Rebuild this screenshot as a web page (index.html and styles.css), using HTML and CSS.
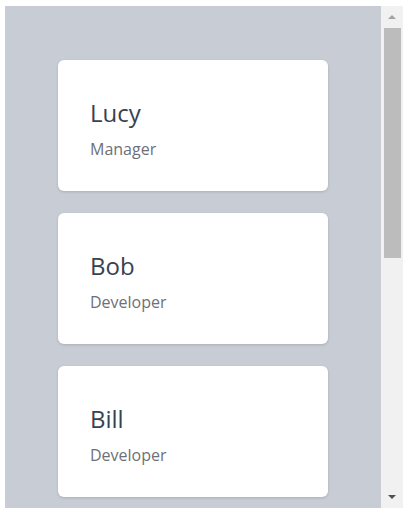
FILE: index.html
```html
<!DOCTYPE html>
<html lang="en">
<head>
    <meta charset="UTF-8">
    <meta name="viewport" content="width=device-width, initial-scale=1.0">
    <title>Team</title>
    <link rel="stylesheet" href="styles.css">
</head>
<body>

    <div class="panel">
        <div class="list">
            <div class="card">
                <div class="name">Lucy</div>
                <div class="role">Manager</div>
            </div>
            <div class="card">
                <div class="name">Bob</div>
                <div class="role">Developer</div>
            </div>
            <div class="card">
                <div class="name">Bill</div>
                <div class="role">Developer</div>
            </div>
        </div>

        <!-- scrollbar drawn by hand, headless hides the real one -->
        <div class="scrollbar">
            <div class="arrow up"></div>
            <div class="track">
                <div class="thumb"></div>
            </div>
            <div class="arrow down"></div>
        </div>
    </div>

</body>
</html>
```

FILE: styles.css
```css
/* Page */
body {
    margin: 6px 5px;
    background-color: #ffffff;
    font-family: 'Open Sans', 'Noto Sans', sans-serif;
}
/* Box holding the list and its scrollbar */
.panel {
    width: 398px;
    height: 502px;
    display: flex;
}
/* List of people */
.list {
    flex: 1;
    overflow: hidden;
    background-color: #c8cdd5;
    padding: 54px 0;
    display: flex;
    flex-direction: column;
    align-items: center;
    gap: 22px;
}
/* Scrollbar */
.scrollbar {
    width: 22px;
    display: flex;
    flex-direction: column;
    background-color: #f1f1f1;
}
.arrow {
    height: 22px;
    display: flex;
    justify-content: center;
    align-items: center;
}
.arrow::before {
    content: '';
    border-left: 4px solid transparent;
    border-right: 4px solid transparent;
}
.arrow.up::before {
    border-bottom: 4px solid #a3a3a3;
}
.arrow.down::before {
    border-top: 4px solid #505050;
}
.track {
    flex: 1;
    padding: 0 2px 0 3px;
}
.thumb {
    height: 230px;
    background-color: #bcbcbc;
}
/* Person card */
.card {
    flex-shrink: 0;
    width: 270px;
    box-sizing: border-box;
    padding: 37px 32px 30px;
    background-color: #ffffff;
    border-radius: 6px;
    box-shadow: 0 1px 3px rgba(0, 0, 0, 0.15);
}
.name {
    font-size: 24px;
    line-height: 32px;
    color: #3a4150;
}
.role {
    margin-top: 8px;
    font-size: 16px;
    line-height: 24px;
    color: #6e7079;
}
```
